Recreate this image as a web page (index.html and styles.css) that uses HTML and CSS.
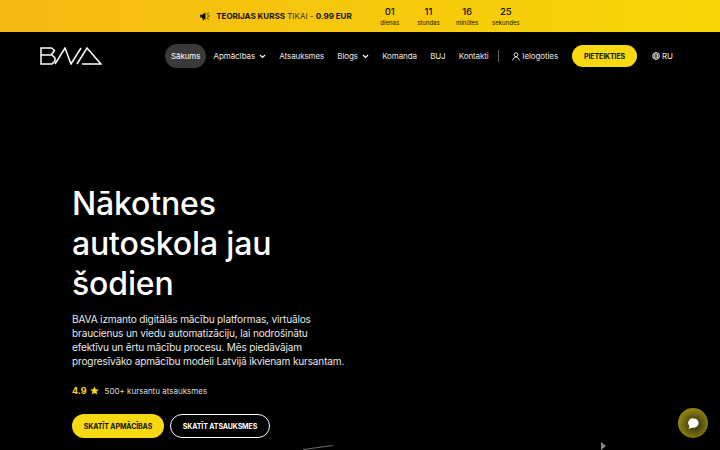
FILE: index.html
```html
<!DOCTYPE html>
<html lang="lv">
<head>
  <meta charset="UTF-8" />
  <meta name="viewport" content="width=device-width, initial-scale=1.0"/>
  <title>BAVA</title>
  <link rel="stylesheet" href="styles.css">
</head>
<body>

  <div class="promo">
    <div class="promo-text">
      <svg class="promo-icon" width="11" height="9" viewBox="0 0 12 10"><path d="M0 3h2l4-2.500v8L2 6H0z" fill="#111"/><path d="M2.200 6.400l1.400 3h1L3.600 6.400z" fill="#111"/><path d="M8 4.500h3M7.600 2.400l2-1.400M7.600 6.600l2 1.400" stroke="#111" stroke-width="1" fill="none"/></svg>
      <span><strong>TEORIJAS KURSS</strong> TIKAI - <strong>0.99 EUR</strong></span>
    </div>
    <div class="timer">
      <div class="timer-cell"><b>01</b><small>dienas</small></div>
      <div class="timer-cell"><b>11</b><small>stundas</small></div>
      <div class="timer-cell"><b>16</b><small>minūtes</small></div>
      <div class="timer-cell"><b>25</b><small>sekundes</small></div>
    </div>
  </div>

  <header class="nav">
    <svg class="logo" width="62" height="18" viewBox="0 0 62 18" fill="none" stroke="#fff" stroke-width="1.500">
      <path d="M1 1h10.500l3 2.500-3 4 3.500 3.500v3L12 17H1z"/>
      <path d="M1 8h10.500"/>
      <path d="M15 17L25 1l6 16L41 1"/>
      <path d="M37 17L47 1l14 16H42"/>
    </svg>
    <nav class="menu">
      <a class="active" href="#">Sākums</a>
      <a href="#">Apmācības <svg class="chev" width="7" height="5" viewBox="0 0 7 5"><path d="M1 1l2.500 2.500L6 1" stroke="#fff" stroke-width="1.200" fill="none"/></svg></a>
      <a href="#">Atsauksmes</a>
      <a href="#">Blogs <svg class="chev" width="7" height="5" viewBox="0 0 7 5"><path d="M1 1l2.500 2.500L6 1" stroke="#fff" stroke-width="1.200" fill="none"/></svg></a>
      <a href="#">Komanda</a>
      <a href="#">BUJ</a>
      <a href="#">Kontakti</a>
    </nav>
    <span class="divider"></span>
    <a class="login" href="#">
      <svg width="8" height="9" viewBox="0 0 9 10" fill="none" stroke="#fff" stroke-width=".9"><circle cx="4.500" cy="3" r="2.200"/><path d="M.7 9.500c.5-2.500 2-3.800 3.800-3.800s3.300 1.300 3.800 3.800"/></svg>
      Ielogoties
    </a>
    <a class="btn btn-yellow nav-btn" href="#">PIETEIKTIES</a>
    <a class="lang" href="#">
      <svg width="8" height="8" viewBox="0 0 10 10" fill="none" stroke="#fff" stroke-width=".8"><circle cx="5" cy="5" r="4.400"/><ellipse cx="5" cy="5" rx="2" ry="4.400"/><path d="M.6 5h8.800M1.200 2.800h7.600M1.200 7.200h7.600"/></svg>
      RU
    </a>
  </header>

  <main class="hero">
    <h1>Nākotnes autoskola jau šodien</h1>
    <p class="lead">BAVA izmanto digitālās mācību platformas, virtuālos braucienus un viedu automatizāciju, lai nodrošinātu efektīvu un ērtu mācību procesu. Mēs piedāvājam progresīvāko apmācību modeli Latvijā ikvienam kursantam.</p>
    <div class="rating">
      <span class="score">4.9</span>
      <svg width="9" height="9" viewBox="0 0 24 24"><path d="M12 1l3.400 7.400 8 .9-6 5.400 1.700 8L12 18.600 4.900 22.700l1.700-8-6-5.400 8-.9z" fill="#f6d90f"/></svg>
      <span class="reviews">500+ kursantu atsauksmes</span>
    </div>
    <div class="actions">
      <a class="btn btn-yellow" href="#">SKATĪT APMĀCĪBAS</a>
      <a class="btn btn-outline" href="#">SKATĪT ATSAUKSMES</a>
    </div>
  </main>

  <div class="scene">
    <span class="scene-line"></span>
    <span class="scene-mark"></span>
  </div>

  <button class="chat">
    <svg width="13" height="13" viewBox="0 0 14 14"><path d="M7.500 1.500a5 5 0 0 1 0 10H5L1.800 13l.9-3.200A5 5 0 0 1 7.500 1.500z" fill="#fff"/></svg>
  </button>

</body>
</html>
```

FILE: styles.css
```css
* {
  box-sizing: border-box;
}
body {
  margin: 0;
  height: 450px;
  overflow: hidden;
  position: relative;
  background: #000;
  color: #fff;
  font-family: "Inter", "Noto Sans", sans-serif;
}
a {
  color: inherit;
  text-decoration: none;
}

.promo {
  height: 32px;
  display: flex;
  justify-content: center;
  align-items: center;
  gap: 26px;
  padding-right: 2px;
  background: linear-gradient(90deg, #f5b913 0%, #f8d706 100%);
  color: #111;
}
.promo-text {
  display: flex;
  align-items: center;
  gap: 5px;
  font-size: 8px;
  color: #333;
}
.promo-text strong {
  font-weight: 700;
  color: #111;
}
.timer {
  display: flex;
  gap: 14.700px;
}
.timer-cell {
  width: 24px;
  display: flex;
  flex-direction: column;
  align-items: center;
  white-space: nowrap;
}
.timer-cell b {
  font-size: 9.500px;
  font-weight: 500;
  line-height: 13px;
}
.timer-cell small {
  font-size: 6px;
  line-height: 9px;
}

.nav {
  height: 48px;
  display: flex;
  align-items: center;
  padding: 0 40px;
  font-size: 8px;
  letter-spacing: -.1px;
  white-space: nowrap;
}
.logo {
  flex-shrink: 0;
  margin-right: 63px;
}
.menu {
  display: flex;
  align-items: center;
}
.menu a {
  display: flex;
  align-items: center;
  gap: 4px;
  height: 24px;
  padding: 0 6px;
  margin-right: 1.200px;
  border-radius: 12px;
  color: #e8e8e8;
}
.menu a.active {
  background: #3a3a3a;
  color: #fff;
}
.divider {
  flex: none;
  width: 1px;
  height: 12px;
  margin: 0 13px 0 2.500px;
  background: #666;
}
.login, .lang {
  display: flex;
  align-items: center;
  gap: 2px;
  color: #e8e8e8;
}
.btn {
  display: flex;
  justify-content: center;
  align-items: center;
  border-radius: 12px;
  font-size: 7px;
  font-weight: 700;
  letter-spacing: -.1px;
  white-space: nowrap;
}
.btn-yellow {
  background: #f6d90f;
  color: #111;
}
.nav-btn {
  flex-shrink: 0;
  width: 65px;
  height: 22px;
  margin: 0 15px 0 14px;
}

.hero {
  padding: 104px 0 0 72px;
  width: 360px;
}
h1 {
  margin: 0;
  width: 250px;
  font-size: 32px;
  font-weight: 500;
  line-height: 40px;
  letter-spacing: -.15px;
}
.lead {
  width: 274px;
  margin: 8px 0 0;
  font-size: 10.100px;
  line-height: 14px;
  letter-spacing: -.17px;
  color: #e6e6e6;
}
.rating {
  display: flex;
  align-items: center;
  gap: 3px;
  margin-top: 17px;
  font-size: 8px;
}
.score {
  color: #f6d90f;
  font-weight: 700;
  font-size: 9px;
}
.reviews {
  margin-left: 3px;
  color: #ddd;
}
.actions {
  display: flex;
  gap: 6px;
  margin-top: 18px;
}
.actions .btn {
  height: 24px;
}
.actions .btn-yellow {
  width: 92px;
}
.btn-outline {
  width: 100px;
  border: 1px solid #fff;
  color: #fff;
}

.scene-line {
  position: absolute;
  left: 303px;
  top: 447px;
  width: 30px;
  height: 1px;
  background: #666;
  transform: rotate(-8deg);
}
.scene-mark {
  position: absolute;
  left: 601px;
  top: 442px;
  border-left: 5px solid #888;
  border-top: 4px solid transparent;
  border-bottom: 4px solid transparent;
}

.chat {
  position: absolute;
  right: 12px;
  bottom: 12px;
  width: 30px;
  height: 30px;
  padding: 0;
  display: flex;
  justify-content: center;
  align-items: center;
  border: none;
  border-radius: 50%;
  background: radial-gradient(circle at 55% 55%, #2c2a10 0%, #8c7f10 65%, #b8a814 100%);
}
```
